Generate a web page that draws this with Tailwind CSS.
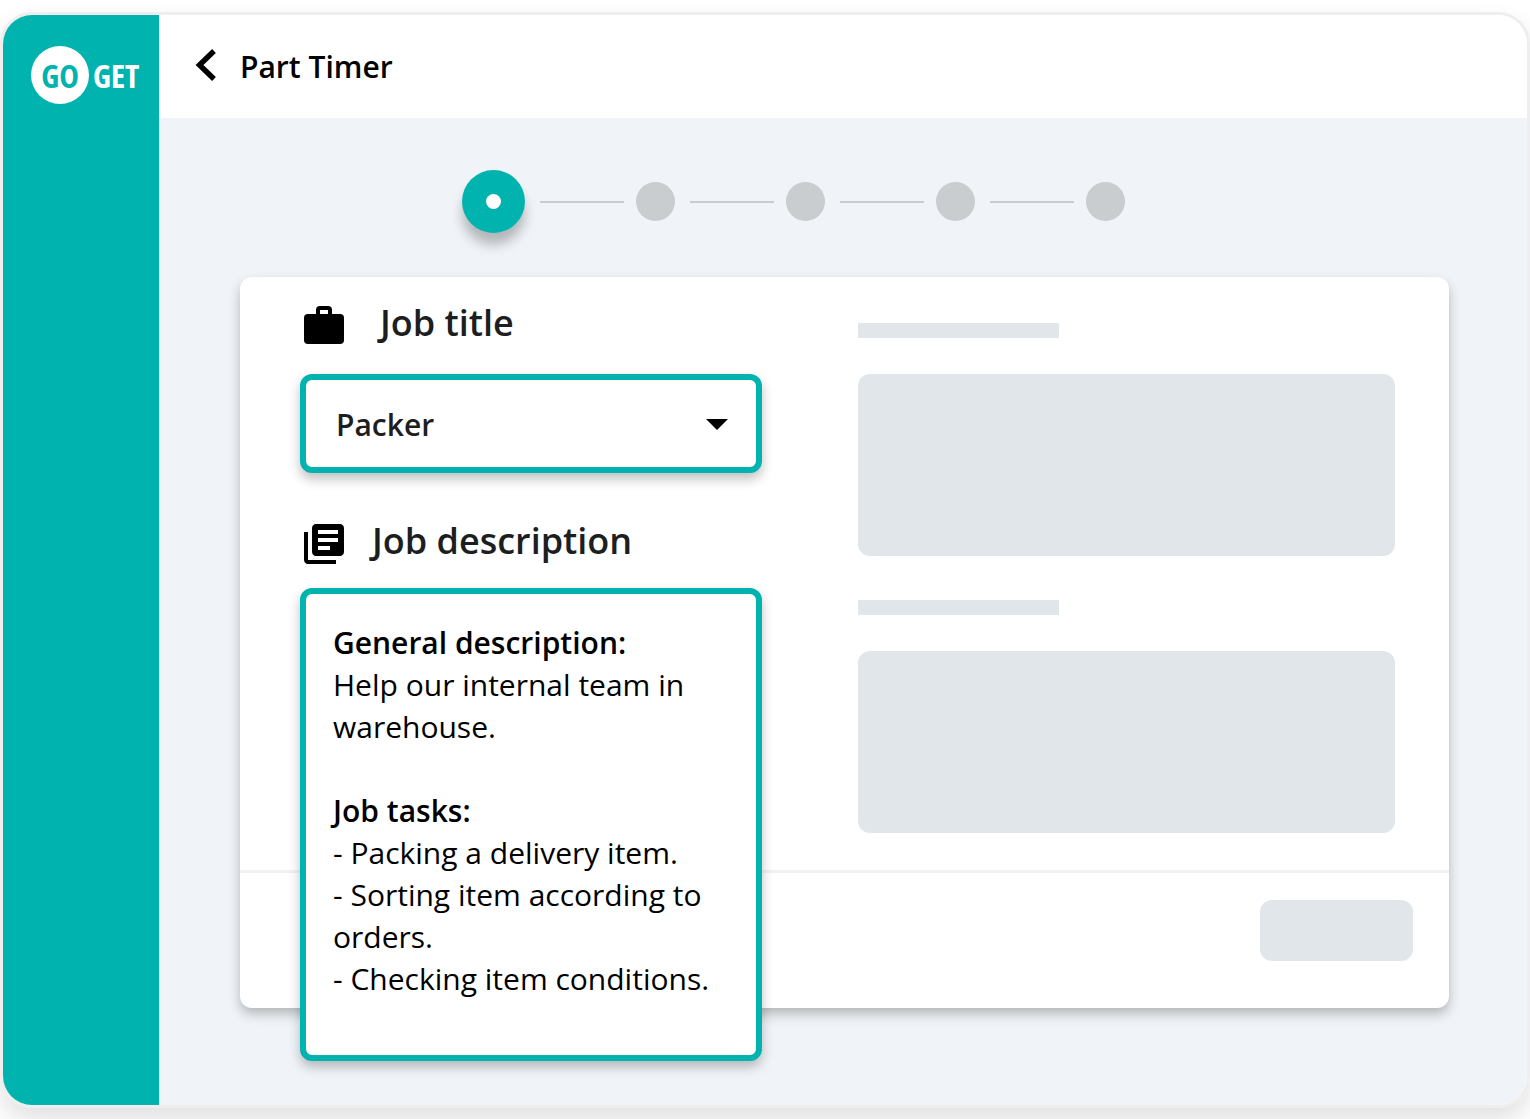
<!DOCTYPE html>
<html lang="en">

<head>
  <meta charset="UTF-8" />
  <meta name="viewport" content="width=device-width, initial-scale=1.0" />
  <title>GoGet - Part Timer</title>

  <!-- Tailwind CSS -->
  <script src="https://cdn.jsdelivr.net/npm/@tailwindcss/browser@4"></script>
</head>

<body class="bg-white pt-3 pb-[11px] min-h-screen flex flex-col overflow-x-hidden font-['Open_Sans',sans-serif] text-black">

  <div class="grow flex border-3 border-[#eeeeee] rounded-[32px] shadow-[0_12px_24px_rgba(0,0,0,0.12)]">

    <!-- Sidebar -->
    <aside class="w-[156px] shrink-0 bg-[#00b3ae] rounded-l-[29px] pt-[31px] pl-7">
      <a href="#" aria-label="GoGet" class="flex items-center gap-1 font-['Open_Sans_Condensed','Roboto_Condensed','Liberation_Sans',sans-serif] font-bold text-[33px] leading-none">
        <span class="size-[58px] shrink-0 rounded-full bg-white text-[#00b3ae] flex items-center justify-center">GO</span>
        <span class="text-white">GET</span>
      </a>
    </aside>

    <div class="grow min-w-0 flex flex-col">

      <!-- Header -->
      <header class="h-[103px] bg-white rounded-tr-[29px] flex items-center gap-6 pl-9">
        <button type="button" aria-label="Back" class="pb-1">
          <svg class="w-[21px] h-8" viewBox="0 0 21 32" fill="none" stroke="#000" stroke-width="5.4">
            <path d="M19 2 4.500 16 19 30" />
          </svg>
        </button>
        <h1 class="text-[30px] leading-10 font-semibold">Part Timer</h1>
      </header>

      <main class="grow bg-[#f0f4f8] rounded-br-[29px] pt-[52px] pl-[81px] pr-[78px] pb-20">

        <!-- Steps -->
        <ol class="flex items-center pl-[222px] h-[63px]">
          <li class="size-[63px] rounded-full bg-[#00b3ae] flex items-center justify-center shadow-[0_12px_12px_rgba(0,0,0,0.25)]">
            <span class="size-[15px] rounded-full bg-white"></span>
          </li>
          <li class="flex items-center">
            <span class="w-[84px] h-0.5 bg-[#c9cdd0] ml-[15px] mr-3"></span>
            <span class="size-[39px] rounded-full bg-[#c9cdd0]"></span>
          </li>
          <li class="flex items-center">
            <span class="w-[84px] h-0.5 bg-[#c9cdd0] ml-[15px] mr-3"></span>
            <span class="size-[39px] rounded-full bg-[#c9cdd0]"></span>
          </li>
          <li class="flex items-center">
            <span class="w-[84px] h-0.5 bg-[#c9cdd0] ml-[15px] mr-3"></span>
            <span class="size-[39px] rounded-full bg-[#c9cdd0]"></span>
          </li>
          <li class="flex items-center">
            <span class="w-[84px] h-0.5 bg-[#c9cdd0] ml-[15px] mr-3"></span>
            <span class="size-[39px] rounded-full bg-[#c9cdd0]"></span>
          </li>
        </ol>

        <!-- Job form -->
        <form class="mt-11 bg-white rounded-xl shadow-[0_6px_12px_rgba(0,0,0,0.25)]">
          <div class="grid grid-cols-[462fr_537fr] gap-24 pl-[60px] pr-[54px]">

            <!-- the description box hangs over the footer, hence the negative margin -->
            <div class="relative z-10 -mb-[191px] pt-[21px]">
              <div class="flex items-center gap-9 h-[50px] pl-1 text-[#1c1e20]">
                <svg class="w-10 h-[38px] mt-1" viewBox="0 0 40 38">
                  <path fill="#000" fill-rule="evenodd" d="M4 8h8V4a4 4 0 0 1 4-4h8a4 4 0 0 1 4 4v4h8a4 4 0 0 1 4 4v22a4 4 0 0 1-4 4H4a4 4 0 0 1-4-4V12a4 4 0 0 1 4-4zM16 4v4h8V4z" />
                </svg>
                <label for="job-title" class="text-[36px] leading-[50px] font-semibold">Job title</label>
              </div>

              <div class="relative mt-[26px]">
                <select id="job-title" class="appearance-none w-full h-[99px] border-6 border-[#00b3ae] rounded-xl bg-white pt-0.5 pl-[30px] pr-16 text-[30px] font-semibold text-[#1c1e20] shadow-[0_6px_12px_rgba(0,0,0,0.25)]">
                  <option>Packer</option>
                </select>
                <svg class="absolute right-[34px] top-[45px] w-[22px] h-[11px] pointer-events-none" viewBox="0 0 22 11">
                  <path d="M0 0h22L11 11z" />
                </svg>
              </div>

              <div class="flex items-center gap-7 h-[50px] mt-[43px] pl-1 text-[#1c1e20]">
                <svg class="size-10 mt-1.5" viewBox="2 2 20 20">
                  <path fill="#000" d="M4 6H2v14c0 1.100.9 2 2 2h14v-2H4zm16-4H8c-1.100 0-2 .9-2 2v12c0 1.100.9 2 2 2h12c1.100 0 2-.9 2-2V4c0-1.100-.9-2-2-2zm-1 9H9V9h10zm-4 4H9v-2h6zm4-8H9V5h10z" />
                </svg>
                <span id="desc-label" class="text-[36px] leading-[50px] font-semibold">Job description</span>
              </div>

              <div role="textbox" aria-multiline="true" aria-labelledby="desc-label" contenteditable="true" class="mt-[22px] min-h-[473px] border-6 border-[#00b3ae] rounded-xl bg-white pt-7 px-[27px] pb-6 text-[30px] leading-[42px] shadow-[0_6px_12px_rgba(0,0,0,0.25)]">
                <p class="font-semibold">General description:</p>
                <p>Help our internal team in warehouse.</p>
                <p class="mt-[42px] font-semibold">Job tasks:</p>
                <p>- Packing a delivery item.</p>
                <p>- Sorting item according to orders.</p>
                <p>- Checking item conditions.</p>
              </div>
            </div>

            <!-- Placeholders -->
            <div class="pt-[46px]">
              <div class="w-[201px] h-[15px] bg-[#e1e6ea]"></div>
              <div class="mt-9 h-[182px] rounded-xl bg-[#e1e6ea]"></div>
              <div class="mt-11 w-[201px] h-[15px] bg-[#e1e6ea]"></div>
              <div class="mt-9 h-[182px] rounded-xl bg-[#e1e6ea]"></div>
            </div>
          </div>

          <footer class="h-[138px] border-t-3 border-[#f2f2f2] flex justify-end pt-[27px] pr-9">
            <button type="button" aria-label="Next" class="w-[153px] h-[61px] rounded-xl bg-[#e1e6ea]"></button>
          </footer>
        </form>

      </main>
    </div>
  </div>

</body>

</html>
